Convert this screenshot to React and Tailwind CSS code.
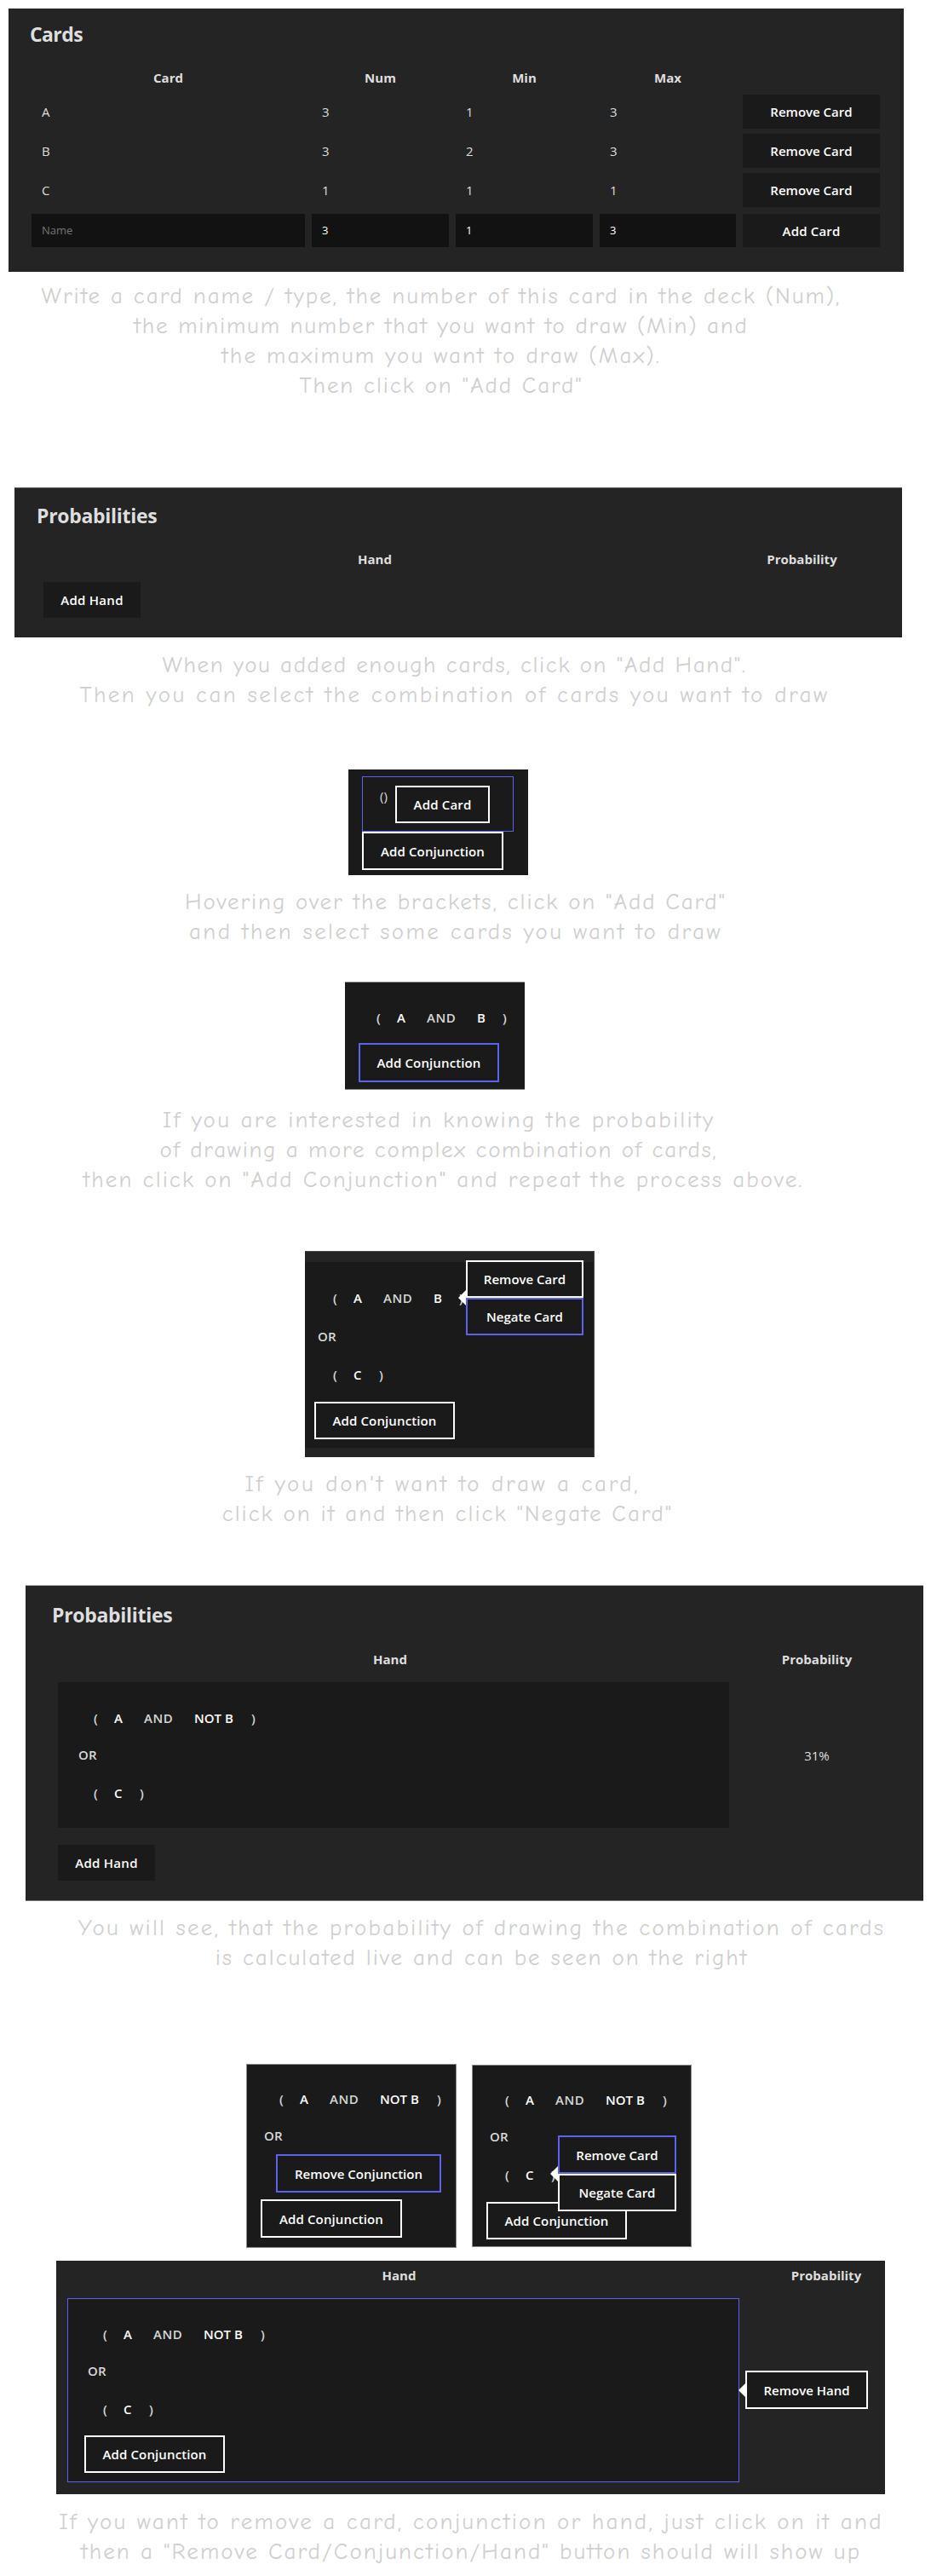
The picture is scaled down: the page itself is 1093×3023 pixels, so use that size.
function Btn({ children, className = '' }) {
  return (
    <button className={`flex items-center justify-center whitespace-nowrap bg-[#1a1a1a] text-[15px] font-semibold leading-5 text-white ${className}`}>
      {children}
    </button>
  );
}

function Caption({ lines, className = '' }) {
  return (
    <div className={`text-center font-['Comic_Neue','Lato',sans-serif] text-[27px] leading-[35px] text-[#cfcfcf] ${className}`}>
      {lines.map(([text, spacing]) => (
        <p key={text} className={`whitespace-nowrap ${spacing}`}>{text}</p>
      ))}
    </div>
  );
}

function Arrow({ className = '' }) {
  return (
    <svg viewBox="0 0 9 18" className={`absolute h-[18px] w-[9px] ${className}`}>
      <path d="M9 0 0 9l9 9z" fill="#fff" />
    </svg>
  );
}

const tokenWidth = { A: 'w-[35px]', B: 'w-[30px]', C: 'w-[30px]', AND: 'w-[59px]', 'NOT B': 'w-[67px]' };

function Conjunction({ tokens, className = '' }) {
  return (
    <div className={`flex pl-[18px] text-[15px] font-semibold leading-5 text-[#d6d6d6] ${className}`}>
      <span className="w-[24px] shrink-0">(</span>
      {tokens.map((t) => (
        <span key={t} className={`shrink-0 whitespace-nowrap ${tokenWidth[t]} ${t === 'AND' ? 'tracking-[0.5px]' : 'text-white'}`}>
          {t}
        </span>
      ))}
      <span>)</span>
    </div>
  );
}

function Or({ className = '' }) {
  return <div className={`text-[15px] font-semibold leading-5 tracking-[0.2px] text-[#dadada] ${className}`}>OR</div>;
}

function Title({ children, className = '' }) {
  return <h2 className={`text-[23px] font-bold leading-8 text-[#dedede] ${className}`}>{children}</h2>;
}

const th = 'text-center text-[15px] font-bold leading-5 text-[#dedede]';
const input = 'flex items-center bg-[#121212] pl-3 text-[13px] text-white';

const cards = [
  ['A', '3', '1', '3'],
  ['B', '3', '2', '3'],
  ['C', '1', '1', '1'],
];

export default function App() {
  return (
    <main className="flex h-[3023px] w-[1093px] flex-col items-start overflow-hidden bg-white font-['Open_Sans','Noto_Sans',sans-serif]">
      <section className="mt-[10px] ml-[10px] h-[309px] w-[1051px] bg-[#242424] pt-[14px]">
        <Title className="pl-[25px] tracking-[-0.6px]">Cards</Title>
        <div className="mt-[25px] ml-[27px] grid grid-cols-[321px_161px_161px_160px_161px] gap-x-2">
          <div className={th}>Card</div>
          <div className={th}>Num</div>
          <div className={th}>Min</div>
          <div className={th}>Max</div>
        </div>
        <div className="mt-[10px] ml-[27px] grid gap-y-[6px]">
          {cards.map((row) => (
            <div key={row[0]} className="grid h-[40px] grid-cols-[321px_161px_161px_160px_161px] gap-x-2 text-[15px] leading-5 text-[#dedede]">
              {row.map((cell, i) => (
                <div key={i} className="flex items-center pl-3">{cell}</div>
              ))}
              <Btn>Remove Card</Btn>
            </div>
          ))}
        </div>
        <div className="mt-[8px] ml-[27px] grid h-[39px] grid-cols-[321px_161px_161px_160px_161px] gap-x-2">
          <div className="flex items-center bg-[#121212] pl-3 text-[13px] text-[#757575]">Name</div>
          <div className={input}>3</div>
          <div className={input}>1</div>
          <div className={input}>3</div>
          <Btn className="tracking-[0.17px]">Add Card</Btn>
        </div>
      </section>
      <Caption
        className="mt-[11px] w-[1036px]"
        lines={[
          ['Write a card name / type, the number of this card in the deck (Num),', 'tracking-[1.95px]'],
          ['the minimum number that you want to draw (Min) and', 'tracking-[1.79px]'],
          ['the maximum you want to draw (Max).', 'tracking-[2.07px]'],
          ['Then click on "Add Card"', 'tracking-[1.9px]'],
        ]}
      />

      <section className="mt-[102px] ml-[17px] h-[176px] w-[1042px] border-t border-[#555] bg-[#242424] pt-[16px]">
        <Title className="pl-[26px] tracking-[-0.3px]">Probabilities</Title>
        <div className="mt-[25px] grid grid-cols-[846px_157px]">
          <div className={th}>Hand</div>
          <div className={th}>Probability</div>
        </div>
        <Btn className="mt-[17px] ml-[34px] h-[42px] w-[114px] tracking-[0.27px]">Add Hand</Btn>
      </section>
      <Caption
        className="mt-[15px] w-[1067px]"
        lines={[
          ['When you added enough cards, click on "Add Hand".', 'tracking-[1.61px]'],
          ['Then you can select the combination of cards you want to draw', 'tracking-[2.42px]'],
        ]}
      />

      <section className="mt-[70px] ml-[409px] h-[124px] w-[211px] bg-[#1a1a1a] pt-[8px] pl-[16px]">
        <div className="flex h-[65px] w-[178px] border border-[#5c62ee] pl-[20px]">
          <span className="mt-[12px] w-[18px] text-[15px] leading-5 text-[#dedede]">()</span>
          <Btn className="mt-[10px] h-[44px] w-[111px] border-2 border-white tracking-[0.17px]">Add Card</Btn>
        </div>
        <Btn className="h-[45px] w-[166px] border-2 border-white tracking-[0.12px]">Add Conjunction</Btn>
      </section>
      <Caption
        className="mt-[14px] w-[1070px]"
        lines={[
          ['Hovering over the brackets, click on "Add Card"', 'tracking-[1.89px]'],
          ['and then select some cards you want to draw', 'tracking-[2.41px]'],
        ]}
      />

      <section className="mt-[41px] ml-[405px] h-[127px] w-[211px] border-y border-[#8a8a8a] bg-[#1a1a1a] pt-[31px]">
        <Conjunction tokens={['A', 'AND', 'B']} className="ml-[19px]" />
        <Btn className="mt-[20px] ml-[16px] h-[46px] w-[165px] border-2 border-[#5c62ee] tracking-[0.12px]">Add Conjunction</Btn>
      </section>
      <Caption
        className="mt-[18px] w-[1030px]"
        lines={[
          ['If you are interested in knowing the probability', 'tracking-[2.26px]'],
          ['of drawing a more complex combination of cards,', 'tracking-[1.68px]'],
          ['then click on "Add Conjunction" and repeat the process above.', 'pl-[11px] tracking-[2.08px]'],
        ]}
      />

      <section className="relative mt-[66px] ml-[358px] h-[242px] w-[340px] border-t border-r border-[#4a4a4a] bg-[#242424] pt-[12px]">
        <div className="h-[218px] bg-[#1a1a1a] pt-[32px] pl-[11px]">
          <Conjunction tokens={['A', 'AND', 'B']} className="ml-[4px]" />
          <Or className="mt-[25px] ml-[4px]" />
          <Conjunction tokens={['C']} className="mt-[25px] ml-[4px]" />
          <Btn className="mt-[22px] h-[44px] w-[165px] border-2 border-white tracking-[0.12px]">Add Conjunction</Btn>
        </div>
        <div className="absolute top-[10px] left-[189px] w-[138px]">
          <Arrow className="top-[35px] left-[-9px]" />
          <Btn className="h-[44px] w-full border-2 border-white">Remove Card</Btn>
          <Btn className="h-[44px] w-full border-2 border-[#5c62ee]">Negate Card</Btn>
        </div>
      </section>
      <Caption
        className="mt-[14px] w-[1051px]"
        lines={[
          ["If you don't want to draw a card,", 'pr-[12px] tracking-[2.69px]'],
          ['click on it and then click "Negate Card"', 'tracking-[1.94px]'],
        ]}
      />

      <section className="mt-[66px] ml-[30px] h-[371px] w-[1054px] border-t border-b border-t-[#aaa] border-b-[#777] bg-[#242424] pt-[18px]">
        <Title className="pl-[31px] tracking-[-0.3px]">Probabilities</Title>
        <div className="mt-[26px] grid grid-cols-[856px_146px]">
          <div className={th}>Hand</div>
          <div className={th}>Probability</div>
        </div>
        <div className="mt-[17px] ml-[38px] grid h-[171px] grid-cols-[788px_206px] items-center">
          <div className="h-full bg-[#1a1a1a] pt-[32px] pl-[24px]">
            <Conjunction tokens={['A', 'AND', 'NOT B']} />
            <Or className="mt-[23px]" />
            <Conjunction tokens={['C']} className="mt-[25px]" />
          </div>
          <div className="text-center text-[15px] leading-5 text-[#dedede]">31%</div>
        </div>
        <Btn className="mt-[20px] ml-[38px] h-[42px] w-[114px] tracking-[0.27px]">Add Hand</Btn>
      </section>
      <Caption
        className="mt-[14px] ml-[38px] w-[1055px]"
        lines={[
          ['You will see, that the probability of drawing the combination of cards', 'tracking-[2.23px]'],
          ['is calculated live and can be seen on the right', 'tracking-[1.96px]'],
        ]}
      />

      <div className="mt-[107px] ml-[289px] flex h-[216px] items-start gap-[18px]">
        <section className="h-[216px] w-[247px] border border-[#8a8a8a] bg-[#1a1a1a] pt-[30px] pl-[16px]">
          <Conjunction tokens={['A', 'AND', 'NOT B']} className="ml-[4px]" />
          <Or className="mt-[23px] ml-[4px]" />
          <Btn className="mt-[12px] ml-[18px] h-[45px] w-[194px] border-2 border-[#5c62ee]">Remove Conjunction</Btn>
          <Btn className="mt-[8px] h-[45px] w-[166px] border-2 border-white tracking-[0.12px]">Add Conjunction</Btn>
        </section>
        <section className="relative mt-px h-[214px] w-[258px] border border-[#8a8a8a] bg-[#1a1a1a] pt-[30px] pl-[16px]">
          <Conjunction tokens={['A', 'AND', 'NOT B']} className="ml-[4px]" />
          <Or className="mt-[23px] ml-[4px]" />
          <Conjunction tokens={['C']} className="mt-[25px] ml-[4px]" />
          <Btn className="mt-[22px] h-[44px] w-[165px] border-2 border-white tracking-[0.12px]">Add Conjunction</Btn>
          <div className="absolute top-[82px] left-[100px] w-[139px]">
            <Arrow className="top-[36px] left-[-9px]" />
            <Btn className="h-[45px] w-full border-2 border-[#5c62ee]">Remove Card</Btn>
            <Btn className="h-[44px] w-full border-2 border-white">Negate Card</Btn>
          </div>
        </section>
      </div>

      <section className="mt-[15px] ml-[66px] h-[274px] w-[973px] bg-[#242424] pt-[7px]">
        <div className="grid grid-cols-[805px_198px]">
          <div className={th}>Hand</div>
          <div className={th}>Probability</div>
        </div>
        <div className="relative mt-[17px] ml-[13px] h-[216px] w-[789px] border border-[#5c62ee] bg-[#1a1a1a] pt-[31px] pl-[19px]">
          <Conjunction tokens={['A', 'AND', 'NOT B']} className="ml-[4px]" />
          <Or className="mt-[23px] ml-[4px]" />
          <Conjunction tokens={['C']} className="mt-[25px] ml-[4px]" />
          <Btn className="mt-[21px] h-[44px] w-[165px] border-2 border-white tracking-[0.12px]">Add Conjunction</Btn>
          <div className="absolute top-[84px] left-[795px] w-[144px]">
            <Arrow className="top-[14px] left-[-8px]" />
            <Btn className="h-[45px] w-full border-2 border-white">Remove Hand</Btn>
          </div>
        </div>
      </section>
      <Caption
        className="mt-[15px] ml-[13px] w-[1080px]"
        lines={[
          ['If you want to remove a card, conjunction or hand, just click on it and', 'tracking-[2.24px]'],
          ['then a "Remove Card/Conjunction/Hand" button should will show up', 'tracking-[2.07px]'],
        ]}
      />
    </main>
  );
}
